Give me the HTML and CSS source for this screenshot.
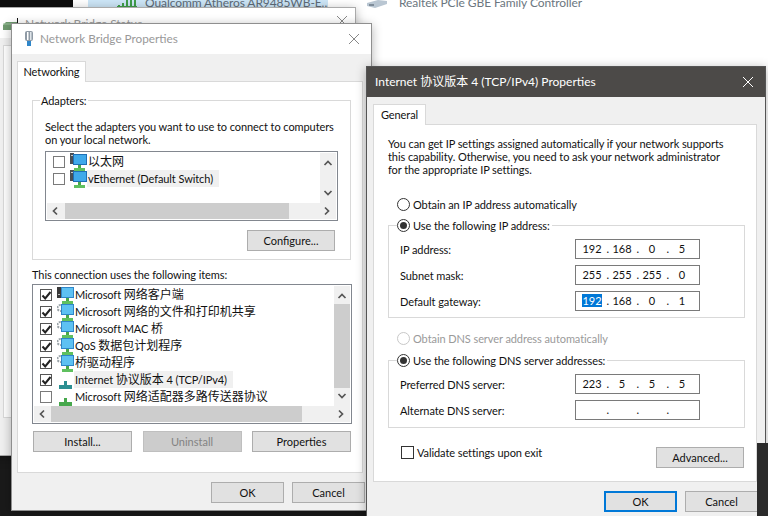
FILE: index.html
```html
<!DOCTYPE html>
<html lang="en">
<head>
  <meta charset="UTF-8">
  <meta name="viewport" content="width=device-width, initial-scale=1.0">
  <title>Network Bridge Properties</title>
  <link rel="stylesheet" href="styles.css">
</head>
<body>
  <svg class="defs" width="0" height="0">
    <symbol id="ico-up" viewBox="0 0 10 10"><path d="M1.5 7 5 3.5 8.500 7" fill="none" stroke="#555" stroke-width="1.700"/></symbol>
    <symbol id="ico-down" viewBox="0 0 10 10"><path d="M1.500 3 5 6.500 8.500 3" fill="none" stroke="#555" stroke-width="1.700"/></symbol>
    <symbol id="ico-left" viewBox="0 0 10 10"><path d="M7 1.500 3.500 5 7 8.500" fill="none" stroke="#555" stroke-width="1.700"/></symbol>
    <symbol id="ico-right" viewBox="0 0 10 10"><path d="M3 1.500 6.500 5 3 8.500" fill="none" stroke="#555" stroke-width="1.700"/></symbol>
    <symbol id="ico-close" viewBox="0 0 12 12"><path d="M1 1 11 11M11 1 1 11" fill="none" stroke="currentColor" stroke-width="1"/></symbol>
    <symbol id="ico-adapter" viewBox="0 0 17 18">
      <rect x="0" y="0" width="4" height="11" fill="#4a4f55"/>
      <rect x="1" y="2" width="2" height="1" fill="#c9c9c9"/>
      <rect x="3" y="1" width="14" height="11" fill="#1f6fb5"/>
      <rect x="4" y="2" width="12" height="9" fill="#3fa9ea"/>
      <rect x="8" y="12" width="3" height="4" fill="#4aa84a"/>
      <rect x="4" y="15" width="11" height="3" fill="#5fc05f"/>
    </symbol>
    <symbol id="ico-service" viewBox="0 0 17 18">
      <circle cx="3.500" cy="5" r="3" fill="none" stroke="#9aa3a8" stroke-width="2" stroke-dasharray="2 1"/>
      <rect x="4" y="1" width="13" height="11" fill="#2f86c9"/>
      <rect x="5" y="2" width="11" height="9" fill="#5dc1f2"/>
      <rect x="9" y="12" width="3" height="4" fill="#4aa84a"/>
      <rect x="5" y="15" width="11" height="3" fill="#5fc05f"/>
    </symbol>
    <symbol id="ico-client" viewBox="0 0 17 18">
      <rect x="0" y="1" width="4" height="11" fill="#3a3a3a"/>
      <rect x="1" y="8" width="2" height="1" fill="#bbb"/>
      <rect x="4" y="1" width="13" height="11" fill="#2f86c9"/>
      <rect x="5" y="2" width="11" height="9" fill="#5dc1f2"/>
      <rect x="9" y="12" width="3" height="4" fill="#4aa84a"/>
      <rect x="5" y="15" width="11" height="3" fill="#5fc05f"/>
    </symbol>
    <symbol id="ico-proto" viewBox="0 0 17 18">
      <path d="M7 10h3v4h5v4H2v-4h5z" fill="#2c8f92"/>
    </symbol>
    <symbol id="ico-proto-green" viewBox="0 0 17 18">
      <path d="M7 10h3v4h5v4H2v-4h5z" fill="#46a84c"/>
    </symbol>
    <symbol id="ico-bridge" viewBox="0 0 12 16">
      <rect x="2" y="0" width="8" height="10" rx="2" fill="#8f9aa5"/>
      <rect x="4" y="1" width="1.500" height="8" fill="#fff"/>
      <rect x="7" y="1" width="1.500" height="8" fill="#dfe5ea"/>
      <rect x="4" y="10" width="4" height="5" fill="#2f86c9"/>
    </symbol>
    <symbol id="ico-check" viewBox="0 0 13 13"><path d="M2.500 6.500 5.200 9.500 10.500 3" fill="none" stroke="#222" stroke-width="2"/></symbol>
  </svg>

  <!-- what is left of the desktop and the connections folder -->
  <div class="black black-top"></div>
  <div class="black black-bottom"></div>
  <div class="folder-row folder-row-wifi">
    <svg class="wifi-bars" width="20" height="7"><path d="M1 7V5h2v2zM5 7V3h2v4zM9 7V0h2v7zM13 7V0h2v7zM17 7V0h2v7z" fill="#3f9e4a"/><path d="M0 6.500h20" stroke="#3f9e4a"/></svg>
    <span>Qualcomm Atheros AR9485WB-E...</span>
  </div>
  <div class="folder-text">Realtek PCIe GBE Family Controller</div>
  <svg class="folder-icon" width="22" height="9"><path d="M1 3 12 0l9 1v3L9 8 1 6z" fill="#b9c6d2"/><path d="M3 4h5v2H3z" fill="#7f8c99"/></svg>

  <!-- Network Bridge Status, almost hidden -->
  <div class="window status-win">
    <div class="status-title">
      <svg class="status-icon" width="15" height="20"><path d="M14.500 3v12" stroke="#111"/><path d="M0 10l3-3h11v8H0z" fill="#6f9a6f"/><path d="M0 9h14" stroke="#9cc09c"/></svg>
      <span>Network Bridge Status</span>
      <svg class="status-close" width="12" height="12"><use href="#ico-close"/></svg>
    </div>
    <div class="status-panel"></div>
  </div>

  <!-- Network Bridge Properties -->
  <div class="window bridge-win">
    <div class="titlebar titlebar-idle">
      <svg class="title-icon" width="12" height="16"><use href="#ico-bridge"/></svg>
      <span class="title-text">Network Bridge Properties</span>
      <svg class="title-close" width="12" height="12"><use href="#ico-close"/></svg>
    </div>
    <div class="win-body bridge-body">
      <div class="tab tab-net">Networking</div>
      <div class="panel bridge-panel">
        <div class="group adapters">
          <span class="legend legend-text">Adapters:</span>
          <p class="intro">Select the adapters you want to use to connect to computers<br>on your local network.</p>
          <div class="listbox adapter-list">
            <div class="list-rows">
              <div class="row"><i class="check"></i><svg class="row-icon" width="17" height="18"><use href="#ico-adapter"/></svg><span class="row-label"><span class="cjk">以太网</span></span></div>
              <div class="row"><i class="check"></i><svg class="row-icon" width="17" height="18"><use href="#ico-adapter"/></svg><span class="row-label row-on">vEthernet (Default Switch)</span></div>
            </div>
            <div class="vbar">
              <svg width="10" height="10"><use href="#ico-up"/></svg>
              <svg width="10" height="10"><use href="#ico-down"/></svg>
            </div>
            <div class="hbar">
              <svg width="10" height="10"><use href="#ico-left"/></svg>
              <div class="hthumb thumb-adapters"></div>
              <svg width="10" height="10"><use href="#ico-right"/></svg>
            </div>
          </div>
          <div class="configure-row"><button class="btn btn-configure">Configure...</button></div>
        </div>
        <p class="items-label">This connection uses the following items:</p>
        <div class="listbox item-list">
          <div class="list-rows">
            <div class="row"><i class="check on"><svg width="13" height="13"><use href="#ico-check"/></svg></i><svg class="row-icon" width="17" height="18"><use href="#ico-client"/></svg><span class="row-label">Microsoft <span class="cjk">网络客户端</span></span></div>
            <div class="row"><i class="check on"><svg width="13" height="13"><use href="#ico-check"/></svg></i><svg class="row-icon" width="17" height="18"><use href="#ico-service"/></svg><span class="row-label">Microsoft <span class="cjk">网络的文件和打印机共享</span></span></div>
            <div class="row"><i class="check on"><svg width="13" height="13"><use href="#ico-check"/></svg></i><svg class="row-icon" width="17" height="18"><use href="#ico-service"/></svg><span class="row-label">Microsoft MAC <span class="cjk">桥</span></span></div>
            <div class="row"><i class="check on"><svg width="13" height="13"><use href="#ico-check"/></svg></i><svg class="row-icon" width="17" height="18"><use href="#ico-service"/></svg><span class="row-label">QoS <span class="cjk">数据包计划程序</span></span></div>
            <div class="row"><i class="check on"><svg width="13" height="13"><use href="#ico-check"/></svg></i><svg class="row-icon" width="17" height="18"><use href="#ico-service"/></svg><span class="row-label"><span class="cjk">桥驱动程序</span></span></div>
            <div class="row"><i class="check on"><svg width="13" height="13"><use href="#ico-check"/></svg></i><svg class="row-icon" width="17" height="18"><use href="#ico-proto"/></svg><span class="row-label row-on">Internet <span class="cjk">协议版本</span> 4 (TCP/IPv4)</span></div>
            <div class="row"><i class="check"></i><svg class="row-icon" width="17" height="18"><use href="#ico-proto-green"/></svg><span class="row-label">Microsoft <span class="cjk">网络适配器多路传送器协议</span></span></div>
          </div>
          <div class="vbar">
            <svg width="10" height="10"><use href="#ico-up"/></svg>
            <div class="vthumb"></div>
            <svg width="10" height="10"><use href="#ico-down"/></svg>
          </div>
          <div class="hbar">
            <svg width="10" height="10"><use href="#ico-left"/></svg>
            <div class="hthumb thumb-items"></div>
            <svg width="10" height="10"><use href="#ico-right"/></svg>
          </div>
        </div>
        <div class="item-buttons">
          <button class="btn btn-item">Install...</button>
          <button class="btn btn-item btn-disabled">Uninstall</button>
          <button class="btn btn-item">Properties</button>
        </div>
      </div>
      <div class="footer">
        <button class="btn btn-foot">OK</button>
        <button class="btn btn-foot">Cancel</button>
      </div>
    </div>
  </div>

  <!-- Internet Protocol Version 4 Properties -->
  <div class="window ipv4-win">
    <div class="titlebar titlebar-active">
      <span class="title-text">Internet 协议版本 4 (TCP/IPv4) Properties</span>
      <svg class="title-close" width="12" height="12"><use href="#ico-close"/></svg>
    </div>
    <div class="win-body ipv4-body">
      <div class="tab tab-general">General</div>
      <div class="panel ipv4-panel">
        <p class="intro">You can get IP settings assigned automatically if your network supports<br>this capability. Otherwise, you need to ask your network administrator<br>for the appropriate IP settings.</p>
        <div class="radio-row radio-first"><i class="radio"></i><span>Obtain an IP address automatically</span></div>
        <div class="group ip-group">
          <div class="legend radio-row"><i class="radio on"></i><span>Use the following IP address:</span></div>
          <div class="field">
            <label>IP address:</label>
            <div class="ip-input"><span class="seg">192</span><span class="dot">.</span><span class="seg">168</span><span class="dot">.</span><span class="seg">0</span><span class="dot">.</span><span class="seg">5</span></div>
          </div>
          <div class="field">
            <label>Subnet mask:</label>
            <div class="ip-input"><span class="seg">255</span><span class="dot">.</span><span class="seg">255</span><span class="dot">.</span><span class="seg">255</span><span class="dot">.</span><span class="seg">0</span></div>
          </div>
          <div class="field">
            <label>Default gateway:</label>
            <div class="ip-input"><span class="seg"><b class="selected">192</b></span><span class="dot">.</span><span class="seg">168</span><span class="dot">.</span><span class="seg">0</span><span class="dot">.</span><span class="seg">1</span></div>
          </div>
        </div>
        <div class="radio-row radio-dns radio-off"><i class="radio"></i><span>Obtain DNS server address automatically</span></div>
        <div class="group dns-group">
          <div class="legend radio-row"><i class="radio on"></i><span>Use the following DNS server addresses:</span></div>
          <div class="field">
            <label>Preferred DNS server:</label>
            <div class="ip-input"><span class="seg">223</span><span class="dot">.</span><span class="seg">5</span><span class="dot">.</span><span class="seg">5</span><span class="dot">.</span><span class="seg">5</span></div>
          </div>
          <div class="field">
            <label>Alternate DNS server:</label>
            <div class="ip-input"><span class="seg"></span><span class="dot">.</span><span class="seg"></span><span class="dot">.</span><span class="seg"></span><span class="dot">.</span><span class="seg"></span></div>
          </div>
        </div>
        <div class="validate-row">
          <div class="validate"><i class="check check-dark"></i><span>Validate settings upon exit</span></div>
          <button class="btn btn-configure btn-advanced">Advanced...</button>
        </div>
      </div>
      <div class="footer">
        <button class="btn btn-foot btn-default">OK</button>
        <button class="btn btn-foot">Cancel</button>
      </div>
    </div>
  </div>

  <div class="black black-right"></div>
</body>
</html>
```

FILE: styles.css
```css
* {
  box-sizing: border-box;
}
html, body {
  height: 100%;
}
body {
  margin: 0;
  overflow: hidden;
  background-color: #fff;
  color: #111;
  font-family: Lato, "Noto Sans CJK SC", sans-serif;
  font-size: 11px;
  letter-spacing: -0.08px;
  line-height: 13px;
}
p {
  margin: 0;
}
.defs {
  position: absolute;
}
.cjk {
  font-size: 12px;
  letter-spacing: 0;
}

/* desktop leftovers */
.black {
  position: absolute;
  background-color: #1a1a1a;
}
.black-top {
  left: 0;
  top: 0;
  width: 73px;
  height: 7px;
  background-color: #0d0d0d;
}
.black-bottom {
  left: 0;
  top: 456px;
  width: 380px;
  height: 60px;
}
.black-right {
  left: 757px;
  top: 443px;
  width: 11px;
  height: 73px;
  background-color: #2b2b2b;
}
.folder-row {
  position: absolute;
  left: 88px;
  top: 0;
  width: 240px;
  height: 8px;
  overflow: hidden;
  background-color: #cde6f7;
  color: #5d6b78;
  font-size: 12px;
  line-height: 8px;
  white-space: nowrap;
}
.folder-row span {
  position: absolute;
  left: 57px;
  top: -1px;
}
.wifi-bars {
  position: absolute;
  left: 29px;
  top: 0;
}
.folder-text {
  position: absolute;
  left: 399px;
  top: -4px;
  color: #6b7680;
  font-size: 12px;
}
.folder-icon {
  position: absolute;
  left: 366px;
  top: 0;
}

/* windows */
.window {
  position: absolute;
  background-color: #f0f0f0;
  border: 1px solid #8f8f8f;
  box-shadow: 0 2px 10px rgba(0, 0, 0, 0.3);
}
.status-win {
  left: -8px;
  top: 7px;
  width: 364px;
  height: 449px;
  border-color: #aaa;
}
.status-title {
  height: 30px;
  background-color: #fff;
  color: #999;
  font-size: 12px;
  position: relative;
}
.status-title span {
  position: absolute;
  left: 32px;
  top: 9px;
}
.status-icon {
  position: absolute;
  left: 10px;
  top: 7px;
}
.status-close {
  position: absolute;
  left: 343px;
  top: 7px;
  color: #888;
}
.status-panel {
  margin: 7px 0 0 10px;
  width: 300px;
  height: 373px;
  background-color: #fff;
  border: 1px solid #d9d9d9;
}
.bridge-win {
  left: 11px;
  top: 23px;
  width: 361px;
  height: 488px;
}
.ipv4-win {
  left: 366px;
  top: 66px;
  width: 400px;
  height: 460px;
  border-color: #555;
}
.titlebar {
  position: relative;
  display: flex;
  align-items: center;
  height: 30px;
  padding-bottom: 1px;
  letter-spacing: 0;
}
.titlebar-idle {
  background-color: #fff;
  color: #999;
  font-size: 11.750px;
}
.titlebar-active {
  background-color: #4c4a48;
  color: #fff;
  font-size: 12px;
}
.title-icon {
  margin-left: 11px;
  margin-right: 5px;
}
.title-text {
  white-space: nowrap;
}
.titlebar-active .title-text {
  margin-left: 8px;
}
.title-close {
  margin-left: auto;
  margin-right: 11px;
}
.titlebar-idle .title-close {
  color: #888;
}
.win-body {
  padding: 7px 0 0 6px;
}
.bridge-body {
  padding-left: 5px;
}
.tab {
  position: relative;
  z-index: 1;
  height: 21px;
  margin-bottom: -1px;
  padding-top: 3px;
  background-color: #fff;
  border: 1px solid #d9d9d9;
  border-bottom: none;
  text-align: center;
}
.tab-net {
  width: 69px;
}
.tab-general {
  width: 53px;
}
.panel {
  background-color: #fff;
  border: 1px solid #d9d9d9;
}
.bridge-panel {
  width: 346px;
  height: 392px;
  padding: 18px 0 0 14px;
}
.ipv4-panel {
  width: 384px;
  height: 358px;
  padding: 12px 0 0 14px;
}

/* groups */
.group {
  position: relative;
  border: 1px solid #d9d9d9;
}
.legend {
  position: absolute;
  left: 8px;
  top: -9px;
  padding-right: 2px;
  background-color: #fff;
}
.legend-text {
  left: 7px;
  top: -7px;
  padding: 0 1px;
}
.adapters {
  width: 319px;
  height: 160px;
  padding: 19px 0 0 12px;
}
.intro {
  white-space: nowrap;
}
.listbox {
  display: grid;
  grid-template-columns: 1fr 16px;
  grid-template-rows: 1fr 16px;
  border: 1px solid #82878f;
  padding: 1px;
  background-color: #fff;
}
.adapter-list {
  width: 293px;
  height: 70px;
  margin-top: 5px;
}
.item-list {
  width: 320px;
  height: 140px;
  margin-top: 3px;
}
.list-rows {
  overflow: hidden;
}
.row {
  display: flex;
  align-items: center;
  height: 17px;
  padding-left: 6px;
  white-space: nowrap;
}
.row-icon {
  flex: none;
  margin: 0 0 0 5px;
}
.row-label {
  height: 17px;
  padding: 2px 1px 0;
}
.row-on {
  padding-right: 6px;
  background-color: #f0f0f0;
}
.check {
  display: block;
  flex: none;
  width: 12px;
  height: 12px;
  border: 1px solid #7a7a7a;
  background-color: #fff;
}
.check.on {
  border-color: #555;
}
.check svg {
  display: block;
  margin: -1px;
}
.check-dark {
  width: 13px;
  height: 13px;
  border-color: #333;
}
.vbar {
  display: flex;
  flex-direction: column;
  justify-content: space-between;
  align-items: center;
  padding: 5px 0;
  background-color: #f0f0f0;
}
.vthumb {
  flex: 1;
  width: 16px;
  margin: 3px 0;
  background-color: #cdcdcd;
}
.hbar {
  grid-column: 1 / 3;
  display: flex;
  align-items: center;
  padding: 0 3px;
  background-color: #f0f0f0;
}
.hthumb {
  height: 16px;
  background-color: #cdcdcd;
}
.thumb-adapters {
  width: 224px;
  margin: 0 0 0 5px;
}
.thumb-items {
  width: 251px;
  margin: 0 0 0 4px;
}
.hbar svg:last-child {
  margin-left: auto;
  margin-right: 1px;
}
.configure-row {
  display: flex;
  justify-content: flex-end;
  margin-top: 9px;
  padding-right: 15px;
}
.items-label {
  margin-top: 8px;
  white-space: nowrap;
}

/* buttons */
.btn {
  margin: 0;
  padding: 0;
  background-color: #e1e1e1;
  border: 1px solid #adadad;
  color: #111;
  font: inherit;
}
.btn-configure {
  width: 88px;
  height: 21px;
}
.btn-advanced {
  margin-top: 1px;
}
.item-buttons {
  display: flex;
  justify-content: space-between;
  width: 318px;
  margin: 7px 0 0 1px;
}
.btn-item {
  width: 99px;
  height: 21px;
}
.btn-disabled {
  background-color: #ccc;
  border-color: #bfbfbf;
  color: #838383;
}
.footer {
  display: flex;
  justify-content: flex-end;
  gap: 8px;
  margin-top: 9px;
}
.bridge-body .footer {
  padding-right: 6px;
}
.ipv4-body .footer {
  width: 385px;
}
.btn-foot {
  width: 73px;
  height: 21px;
}
.btn-default {
  border: 2px solid #0078d7;
}

/* radios and address fields */
.radio-row {
  display: flex;
  align-items: center;
  height: 17px;
  white-space: nowrap;
}
.radio {
  display: block;
  flex: none;
  width: 13px;
  height: 13px;
  margin-right: 3px;
  border: 1px solid #333;
  border-radius: 50%;
  background-color: #fff;
}
.radio.on {
  padding: 2px;
  background-clip: content-box;
  background-color: #333;
}
.radio-first {
  margin: 20px 0 0 9px;
}
.radio-dns {
  margin: 12px 0 0 9px;
}
.radio-off {
  color: #9a9a9a;
}
.radio-off .radio {
  border-color: #c8c8c8;
}
.ip-group {
  width: 357px;
  height: 93px;
  margin-top: 12px;
  padding: 13px 0 0 11px;
}
.dns-group {
  width: 357px;
  height: 68px;
  margin-top: 13px;
  padding: 13px 0 0 11px;
}
.field {
  display: flex;
  align-items: center;
  height: 20px;
  margin-bottom: 6px;
}
.field label {
  width: 175px;
}
.ip-input {
  display: flex;
  width: 125px;
  height: 20px;
  padding: 2px 0 0 3px;
  background-color: #fff;
  border: 1px solid #7a7a7a;
}
.seg {
  width: 26px;
  text-align: center;
}
.dot {
  width: 4px;
  text-align: right;
}
.selected {
  display: inline-block;
  padding: 0 1px;
  background-color: #0078d7;
  color: #fff;
  font-weight: normal;
}
.validate-row {
  display: flex;
  justify-content: space-between;
  width: 356px;
  margin-top: 18px;
}
.validate {
  display: flex;
  align-items: center;
  gap: 3px;
  height: 13px;
  margin-left: 13px;
}
```
